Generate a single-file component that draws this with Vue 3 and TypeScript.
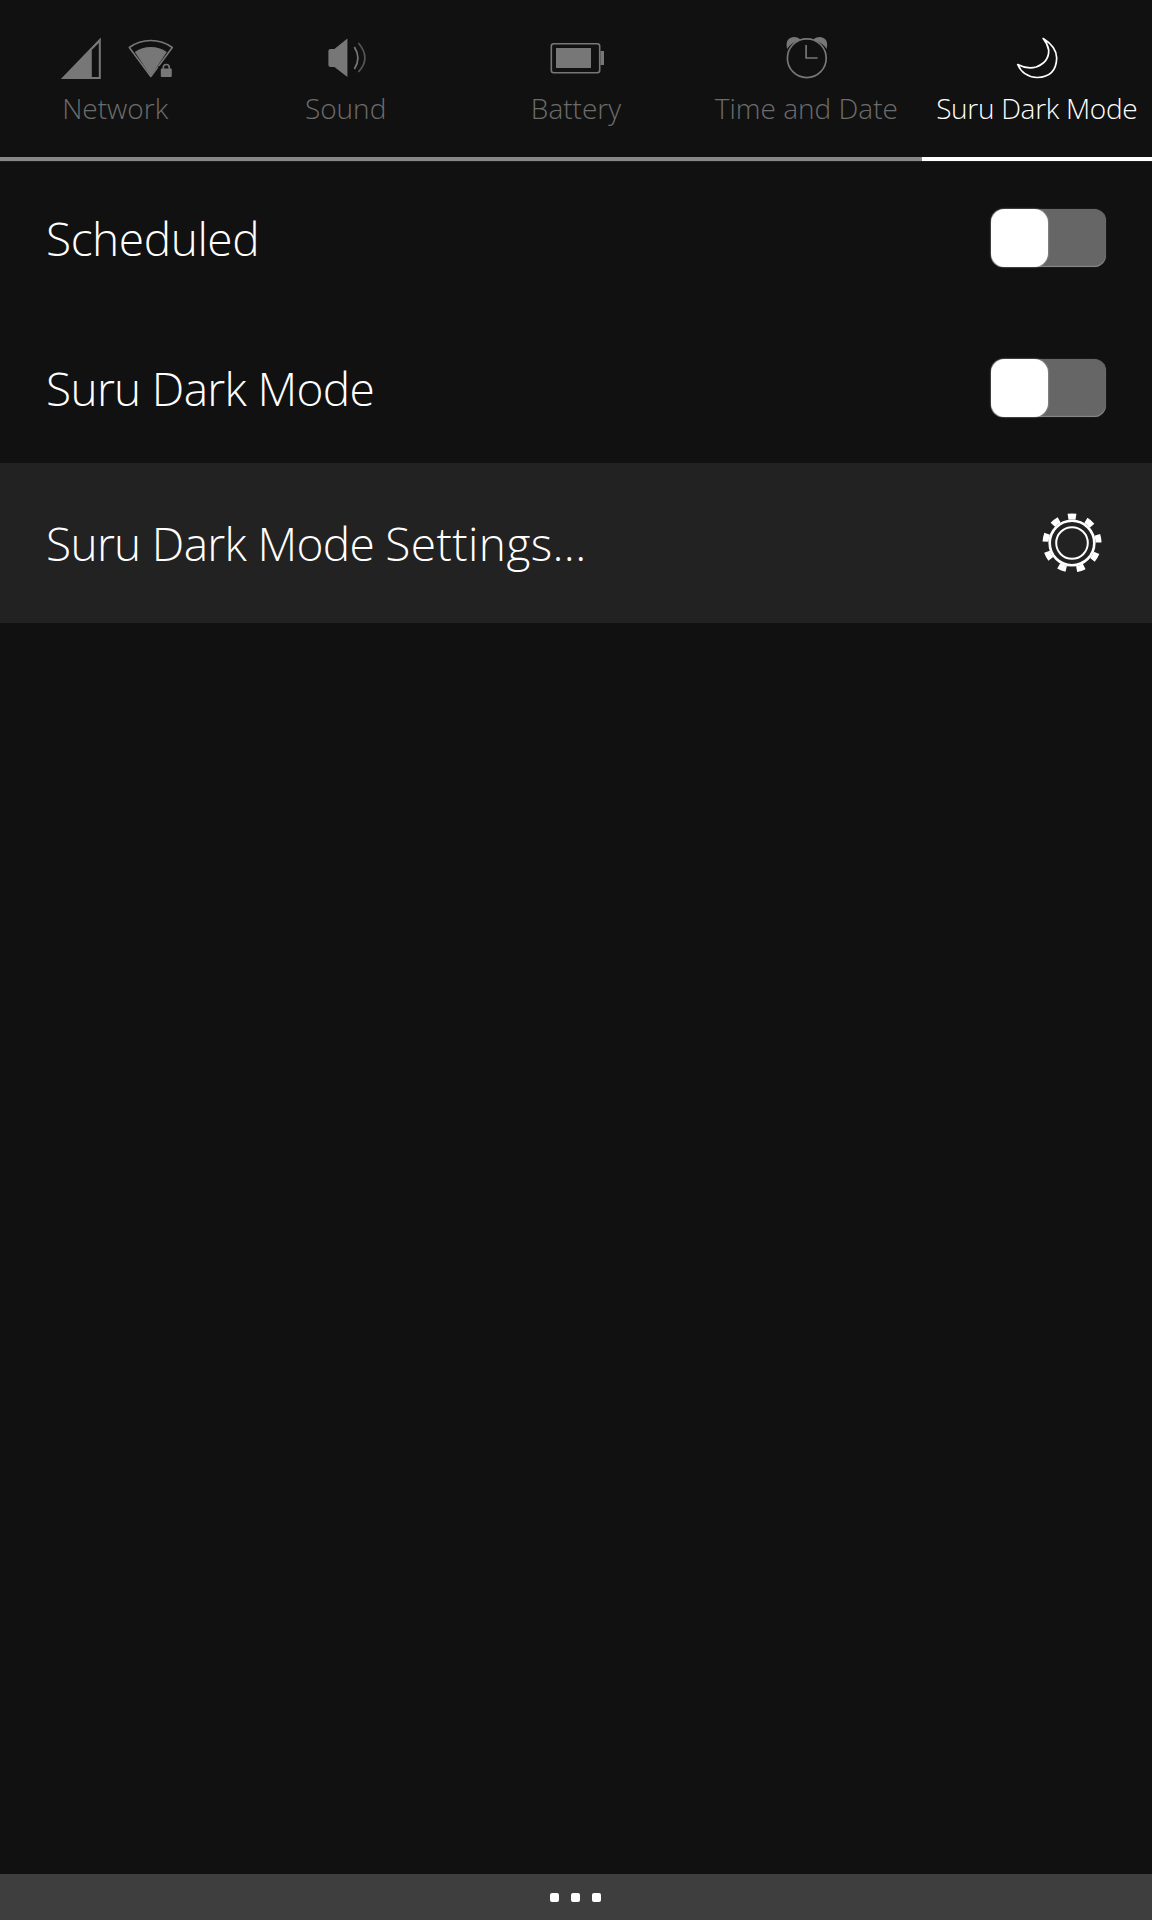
<template>
  <div class="page">
    <header class="tabs">
      <div class="tab">
        <svg class="icon" width="120" height="48" viewBox="55.2 33 120 48">
          <path d="M61 79 L101 37.5 V79 Z M92 77 H99 V43 L92 50 Z" fill="#777" fill-rule="evenodd" />
          <path d="M129.5 47.5 A36.5 36.5 0 0 1 172.5 47.5 L151 76.5 Z" fill="none" stroke="#777" stroke-width="1.6" stroke-linejoin="round" />
          <path d="M135 52 A28 28 0 0 1 167 52 L151 76 Z" fill="#777" />
          <path d="M158.5 66 h15 v12 h-15 Z" fill="#111" />
          <rect x="161" y="68.5" width="11" height="8.5" rx="1" fill="#777" />
          <path d="M163.5 69 v-1.5 a3 3 0 0 1 6 0 V69" fill="none" stroke="#777" stroke-width="1.6" />
        </svg>
        <span class="label">Network</span>
      </div>
      <div class="tab">
        <svg class="icon" width="48" height="48" viewBox="321.6 33 48 48">
          <path d="M334 49 L347 38.5 V77 L334 67 H330 Q328 67 328 65 V51 Q328 49 330 49 Z" fill="#777" />
          <path d="M354 47 Q361 58 354 69" fill="none" stroke="#777" stroke-width="1.7" />
          <path d="M358 43 Q371 58 358 72" fill="none" stroke="#555" stroke-width="1.7" />
        </svg>
        <span class="label">Sound</span>
      </div>
      <div class="tab">
        <svg class="icon" width="60" height="48" viewBox="546 33 60 48">
          <rect x="551.3" y="43.8" width="48.4" height="29" rx="2.5" fill="none" stroke="#777" stroke-width="1.6" />
          <rect x="556" y="48" width="35" height="20" fill="#777" />
          <rect x="600.5" y="51" width="3.5" height="14" fill="#777" />
        </svg>
        <span class="label">Battery</span>
      </div>
      <div class="tab">
        <svg class="icon" width="48" height="48" viewBox="782.4 33 48 48">
          <circle cx="807.2" cy="58.2" r="19.4" fill="none" stroke="#777" stroke-width="1.7" />
          <path d="M787.5 49 Q785 38 794 37 Q799 37 801 40 Q792 42 787.5 49 Z" fill="#777" />
          <path d="M827 49 Q829.5 38 820.5 37 Q815.5 37 813.5 40 Q822.5 42 827 49 Z" fill="#777" />
          <path d="M806.5 45 V58 H818" fill="none" stroke="#777" stroke-width="1.7" />
        </svg>
        <span class="label">Time and Date</span>
      </div>
      <div class="tab active">
        <svg class="icon" width="48" height="48" viewBox="1012.8 33 48 48">
          <path d="M1043 38.5 Q1056.5 47 1056.5 58 Q1056 77 1037 77.5 Q1023 77 1017.5 64.5 Q1027 69.5 1036 67 Q1049 62 1048.5 50 Q1047.5 44 1043 38.5 Z" fill="none" stroke="#fff" stroke-width="1.7" stroke-linejoin="round" />
        </svg>
        <span class="label">Suru Dark Mode</span>
      </div>
    </header>

    <div class="rule">
      <div class="rule-rest"></div>
      <div class="rule-active"></div>
    </div>

    <main class="list">
      <div class="row">
        <span class="row-text">Scheduled</span>
        <div class="switch"><div class="thumb"></div></div>
      </div>
      <div class="row">
        <span class="row-text suru">Suru Dark Mode</span>
        <div class="switch"><div class="thumb"></div></div>
      </div>
      <div class="row link">
        <span class="row-text suru">Suru Dark Mode <span class="more">Settings...</span></span>
        <svg class="gear" width="64" height="64" viewBox="-32 -32 64 64">
          <circle r="22.3" fill="none" stroke="#fff" stroke-width="2.6" />
          <circle r="15.8" fill="none" stroke="#fff" stroke-width="2" />
          <circle
            r="26.5"
            fill="none"
            stroke="#fff"
            stroke-width="6"
            stroke-dasharray="8 10.5"
            transform="rotate(-98.6)"
          />
        </svg>
      </div>
    </main>

    <footer class="bottom">
      <span class="dot"></span>
      <span class="dot"></span>
      <span class="dot"></span>
    </footer>
  </div>
</template>

<script setup lang="ts">
</script>

<style>
html,
body {
  margin: 0;
  background: #111;
}
</style>

<style scoped>
.page {
  width: 1152px;
  height: 1920px;
  display: flex;
  flex-direction: column;
  background: #111;
  font-family: "Open Sans", "Noto Sans", sans-serif;
  font-weight: 300;
  color: #fff;
  overflow: hidden;
}

.tabs {
  height: 157px;
  display: flex;
  box-sizing: border-box;
  padding-top: 33px;
}

.tab {
  width: 230.4px;
  display: flex;
  flex-direction: column;
  align-items: center;
  color: #6c6c6c;
}

.tab.active {
  color: #fff;
}

.icon {
  display: block;
  flex: none;
}

.label {
  margin-top: 9px;
  font-size: 28px;
  line-height: 36px;
  letter-spacing: 0;
  white-space: nowrap;
}

.active .label {
  letter-spacing: -0.3px;
}

.rule {
  height: 4px;
  display: flex;
  border-bottom: 1px solid #1e1e1e;
}

.rule-rest {
  flex: 1;
  background: #888;
}

.rule-active {
  width: 230.4px;
  background: #fff;
}

.list {
  flex: 1;
  padding-top: 1px;
}

.row {
  height: 150px;
  display: flex;
  align-items: center;
  justify-content: space-between;
  padding: 0 46px;
}

.row.link {
  height: 160px;
  background: #222;
  padding-right: 48px;
}

.row-text {
  font-size: 46px;
  line-height: 60px;
  letter-spacing: -0.42px;
}

.suru {
  letter-spacing: -0.68px;
}

.more {
  letter-spacing: 0.4px;
}

.switch {
  width: 115px;
  height: 58px;
  border-radius: 12px;
  background: #666;
  box-shadow: inset 0 -1px 1px #8a8a8a, 0 0 1px #666;
}

.thumb {
  width: 57px;
  height: 58px;
  border-radius: 14px;
  background: #fff;
  box-shadow: 0 0 2px rgba(255, 255, 255, 0.6);
}

.bottom {
  height: 46px;
  display: flex;
  align-items: center;
  justify-content: center;
  gap: 12px;
  padding-right: 1px;
  background: #3e3e3e;
}

.dot {
  width: 9px;
  height: 9px;
  border-radius: 2px;
  background: #fff;
}
</style>
